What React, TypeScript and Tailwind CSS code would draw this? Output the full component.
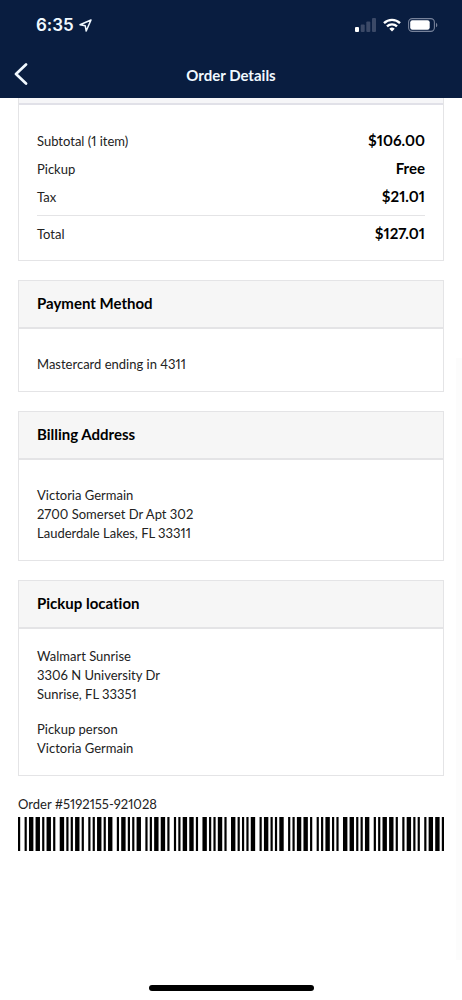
import type { ReactNode } from "react";

const CODE39: Record<string, string> = {
  "0": "nnnwwnwnn",
  "1": "wnnwnnnnw",
  "2": "nnwwnnnnw",
  "3": "wnwwnnnnn",
  "4": "nnnwwnnnw",
  "5": "wnnwwnnnn",
  "6": "nnwwwnnnn",
  "7": "nnnwnnwnw",
  "8": "wnnwnnwnn",
  "9": "nnwwnnwnn",
  "*": "nwnnwnwnn",
};

function Barcode({ value }: { value: string }) {
  const bars: { x: number; w: number }[] = [];
  let x = 0;
  for (const char of `*${value}*`) {
    CODE39[char].split("").forEach((size, i) => {
      const w = size === "w" ? 2 : 1;
      if (i % 2 === 0) bars.push({ x, w });
      x += w;
    });
    x += 1;
  }
  return (
    <svg
      className="block h-[34px] w-full"
      viewBox={`0 0 ${x - 1} 34`}
      preserveAspectRatio="none"
      role="img"
      aria-label="Order barcode"
    >
      {bars.map((bar) => (
        <rect key={bar.x} x={bar.x} y="0" width={bar.w} height="34" fill="#000" />
      ))}
    </svg>
  );
}

function StatusBar() {
  return (
    <div className="flex h-[50px] items-center justify-between pr-6 pl-9 text-[#f1f9ff]">
      <div className="flex items-center gap-[5px]">
        <span className="font-['Inter',sans-serif] text-[17px] leading-5 font-semibold">6:35</span>
        <svg width="13" height="13" viewBox="0 0 13 13" fill="none" aria-hidden="true">
          <path d="M12 1 1 5.800l5.200.9 1 5.300Z" stroke="currentColor" strokeWidth="1.500" strokeLinejoin="round" />
        </svg>
      </div>
      <div className="flex items-center gap-[7px]">
        <svg width="21" height="14" viewBox="0 0 21 14" aria-hidden="true">
          <rect x="0" y="9" width="4" height="5" rx="1" fill="#fff" />
          <rect x="5.700" y="6.500" width="4" height="7.500" rx="1" fill="#3b4967" />
          <rect x="11.300" y="3.500" width="4" height="10.500" rx="1" fill="#3b4967" />
          <rect x="17" y="0" width="4" height="14" rx="1" fill="#3b4967" />
        </svg>
        <svg width="18" height="14" viewBox="0 0 18 14" fill="none" stroke="#fff" strokeWidth="2.400" aria-hidden="true">
          <path d="M1 5.100a11.500 11.500 0 0 1 16 0" />
          <path d="M4 8.400a7.200 7.200 0 0 1 10 0" />
          <path d="M6.300 10.800a3.900 3.900 0 0 1 5.400 0L9 13.600Z" fill="#fff" stroke="none" />
        </svg>
        <svg width="30" height="14" viewBox="0 0 30 14" aria-hidden="true">
          <rect x="0.600" y="0.600" width="25.800" height="12.800" rx="3.600" fill="none" stroke="#77829a" strokeWidth="1.100" />
          <rect x="2.200" y="2.200" width="19.500" height="9.600" rx="2.200" fill="#fff" />
          <path d="M28 4.700c1.800.8 1.800 3.800 0 4.600Z" fill="#77829a" />
        </svg>
      </div>
    </div>
  );
}

function Card({ title, children }: { title: string; children: ReactNode }) {
  return (
    <section className="border border-[#e4e4e6]">
      <h2 className="border-b-2 border-[#e4e4e6] bg-[#f6f6f6] px-[18px] pt-3 pb-[14px] text-[15px] leading-5 font-bold">
        {title}
      </h2>
      {children}
    </section>
  );
}

function PriceRow({ label, amount }: { label: string; amount: string }) {
  return (
    <div className="flex items-center justify-between">
      <dt className="pt-0.5 text-[13px] leading-6 text-[#222]">{label}</dt>
      <dd className="text-[15px] leading-7 font-bold">{amount}</dd>
    </div>
  );
}

export default function App() {
  return (
    <div className="relative flex min-h-screen flex-col bg-white font-['Lato',sans-serif] text-black proportional-nums [font-variant-ligatures:none]">
      <header className="bg-[#091d40] text-[#f1f9ff]">
        <StatusBar />
        <div className="grid h-12 grid-cols-[1fr_auto_1fr] items-center px-[14px]">
          <button type="button" aria-label="Back" className="w-[14px]">
            <svg width="14" height="22" viewBox="0 0 14 22" fill="none" aria-hidden="true">
              <path d="M12 1.500 2 11l10 9.500" stroke="currentColor" strokeWidth="2.700" strokeLinecap="round" strokeLinejoin="round" />
            </svg>
          </button>
          <h1 className="pt-0.5 text-[15px] leading-5 font-bold">Order Details</h1>
        </div>
      </header>

      <main className="flex flex-col gap-[19px] px-[18px]">
        <section className="border border-t-0 border-[#e4e4e6]">
          <div className="h-[7px] border-b-2 border-[#e1e1e8] bg-[#f6f6f8]" />
          <dl className="px-[18px] pt-[21px] pb-[13px]">
            <PriceRow label="Subtotal (1 item)" amount="$106.00" />
            <PriceRow label="Pickup" amount="Free" />
            <PriceRow label="Tax" amount="$21.01" />
            <div className="mt-[5px] border-t border-[#e4e4e6] pt-[3px]">
              <PriceRow label="Total" amount="$127.01" />
            </div>
          </dl>
        </section>

        <Card title="Payment Method">
          <p className="px-[18px] pt-[26px] pb-[17px] text-[13px] leading-[19px] text-[#222]">
            Mastercard ending in 4311
          </p>
        </Card>

        <Card title="Billing Address">
          <address className="px-[18px] pt-[26px] pb-[17px] text-[13px] leading-[19px] text-[#222] not-italic">
            Victoria Germain
            <br />
            2700 Somerset Dr Apt 302
            <br />
            Lauderdale Lakes, FL 33311
          </address>
        </Card>

        <Card title="Pickup location">
          <div className="px-[18px] pt-[18px] pb-[17px] text-[13px] leading-[19px] text-[#222]">
            <address className="not-italic">
              Walmart Sunrise
              <br />
              3306 N University Dr
              <br />
              Sunrise, FL 33351
            </address>
            <p className="mt-4">
              Pickup person
              <br />
              Victoria Germain
            </p>
          </div>
        </Card>

        <section>
          <p className="pb-[3px] text-[13px] leading-[19px] text-[#222]">Order #5192155-921028</p>
          <Barcode value="5192155921028" />
        </section>
      </main>

      <div className="mt-auto flex justify-center pt-8 pb-[9px]">
        <div className="h-[6px] w-[165px] rounded-full bg-black" />
      </div>
      <div className="absolute top-[358px] right-0 bottom-10 w-[6px] bg-[#fcfcfc]" />
    </div>
  );
}
